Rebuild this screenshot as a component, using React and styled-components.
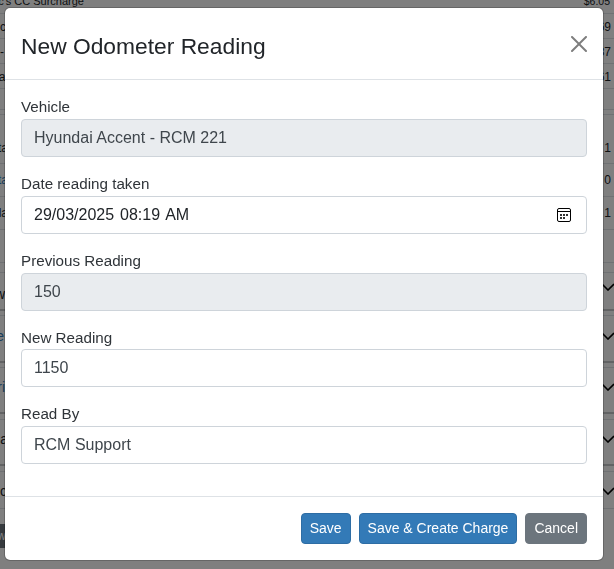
import styled, { createGlobalStyle } from 'styled-components';

const GlobalStyle = createGlobalStyle`
  html, body {
    margin: 0;
    height: 100%;
    overflow: hidden;
    background: #fff;
    font-family: "Liberation Sans", Arial, sans-serif;
    color: #212529;
  }
  * { box-sizing: border-box; }
`;

const Table = styled.div`
  margin-top: -11px;
  width: 614px;
`;

const Row = styled.div`
  display: flex;
  justify-content: space-between;
  align-items: center;
  height: ${(props) => props.$height}px;
  padding-top: ${(props) => props.$shift || 0}px;
  padding-bottom: ${(props) => props.$lift || 0}px;
  border-bottom: ${(props) => (props.$thick ? '2px solid #c4c6c8' : '1px solid #dee2e6')};
`;

const LeftCell = styled.div`
  width: ${(props) => props.$width || 6}px;
  margin-top: ${(props) => props.$drop || 0}px;
  display: flex;
  justify-content: flex-end;
  overflow: hidden;
  white-space: nowrap;
  font-size: ${(props) => props.$size || 12}px;
  color: ${(props) => (props.$link ? '#337ab7' : '#212529')};
`;

const RightCell = styled.div`
  padding-right: ${(props) => props.$pad || 3}px;
  font-size: ${(props) => props.$size || 12}px;
  white-space: nowrap;
`;

const ChevronIcon = styled.svg`
  display: block;
  margin-right: -1px;
`;

const FooterStrip = styled.div`
  margin-top: 15px;
  width: 6px;
  height: 24px;
  background: #6c757d;
  color: #fff;
  font-size: 12px;
  line-height: 24px;
  display: flex;
  justify-content: flex-end;
  overflow: hidden;
`;

const Backdrop = styled.div`
  position: fixed;
  inset: 0;
  background: rgba(0, 0, 0, 0.5);
`;

const Modal = styled.div`
  width: 600px;
  margin: 7px 0 0 4px;
  background: #fff;
  border: 1px solid rgba(0, 0, 0, 0.2);
  border-radius: 6px;
  background-clip: padding-box;
`;

const ModalHeader = styled.div`
  height: 72px;
  display: flex;
  align-items: center;
  justify-content: space-between;
  padding: 4px 16px 0;
  border-bottom: 1px solid #dee2e6;
`;

const Title = styled.h5`
  margin: 0;
  font-size: 22.8px;
  font-weight: 500;
  line-height: 36px;
`;

const CloseButton = styled.button`
  width: 16px;
  height: 16px;
  margin-bottom: 4px;
  padding: 0;
  border: 0;
  background: none;
  opacity: 0.5;
  display: flex;
`;

const ModalBody = styled.div`
  padding: 16.2px 16px 16px;
`;

const FormGroup = styled.div`
  margin-bottom: 16px;
`;

const Label = styled.label`
  display: block;
  font-size: 15.2px;
  line-height: 22.8px;
  color: #2f3439;
`;

const FieldWrap = styled.div`
  position: relative;
`;

const Input = styled.input`
  display: block;
  width: 100%;
  height: 38px;
  padding: 6px 12px;
  font: inherit;
  font-size: 16px;
  line-height: 24px;
  word-spacing: ${(props) => props.$wordSpacing || 0}px;
  color: ${(props) => (props.$dark ? '#212529' : '#3f464c')};
  background: ${(props) => (props.$locked ? '#e9ecef' : '#fff')};
  border: 1px solid #ced4da;
  border-radius: 4px;
  outline: none;
`;

const PickerIcon = styled.svg`
  position: absolute;
  top: 12px;
  right: 15px;
  width: 15px;
  height: 15px;
`;

const ModalFooter = styled.div`
  display: flex;
  justify-content: flex-end;
  gap: 8px;
  padding: 16px;
  border-top: 1px solid #dee2e6;
`;

const Button = styled.button`
  height: 31px;
  padding: 4px 8px;
  font: inherit;
  font-size: 14px;
  line-height: 21px;
  color: #fff;
  background: ${(props) => (props.$secondary ? '#6c757d' : '#337ab7')};
  border: 1px solid ${(props) => (props.$secondary ? '#6c757d' : '#2e6da4')};
  border-radius: 4px;
`;

const rows = [
  { height: 25, left: "Misc's CC Surcharge", width: 84, size: 11, right: '$6.05', rightSize: 10.5, rightPad: 4 },
  { height: 25, shift: 2, left: 'Misc', right: '$4.69' },
  { height: 25, shift: 2, left: '-', width: 4, right: '$2.37' },
  { height: 25, shift: 2, left: 'Total', width: 8, right: '$1.61' },
  { height: 21 },
  { height: 5 },
  { height: 49, shift: 18, left: 'Data', width: 8, right: '1' },
  { height: 33, left: 'Data', width: 8, link: true, right: '0' },
  { height: 33, left: 'Sla', width: 8, right: '1' },
  { height: 33 },
  { height: 10 },
  { height: 38, left: 'View', width: 5, size: 14, chevron: true, lift: 8, drop: 14, thick: true },
  { height: 5 },
  { height: 47, left: 'Note', width: 4, size: 14, link: true, chevron: true, lift: 5, thick: true },
  { height: 5 },
  { height: 46, left: 'Tri', width: 5, size: 14, link: true, chevron: true, lift: 6, thick: true },
  { height: 6 },
  { height: 46, left: 'Usa', width: 8, size: 14, chevron: true, lift: 6, thick: true },
  { height: 6 },
  { height: 37, left: 'Doc', width: 7, size: 14, chevron: true, shift: 2 },
];

const Chevron = () => (
  <ChevronIcon width="14" height="8" viewBox="0 0 14 8" fill="none">
    <path d="M1 1l6 6 6-6" stroke="#000" strokeWidth="1.6" />
  </ChevronIcon>
);

const App = () => {
  return (
    <>
      <GlobalStyle />
      <Table>
        {rows.map((row, i) => (
          <Row key={i} $height={row.height} $shift={row.shift} $lift={row.lift} $thick={row.thick}>
            <LeftCell $width={row.width} $size={row.size} $link={row.link} $drop={row.drop}>
              {row.left}
            </LeftCell>
            {row.chevron ? (
              <Chevron />
            ) : (
              <RightCell $size={row.rightSize} $pad={row.rightPad}>
                {row.right}
              </RightCell>
            )}
          </Row>
        ))}
        <FooterStrip>New</FooterStrip>
      </Table>
      <Backdrop>
        <Modal>
          <ModalHeader>
            <Title>New Odometer Reading</Title>
            <CloseButton aria-label="Close">
              <svg width="16" height="16" viewBox="0 0 16 16" fill="#000">
                <path d="M.293.293a1 1 0 0 1 1.414 0L8 6.586 14.293.293a1 1 0 1 1 1.414 1.414L9.414 8l6.293 6.293a1 1 0 0 1-1.414 1.414L8 9.414l-6.293 6.293a1 1 0 0 1-1.414-1.414L6.586 8 .293 1.707a1 1 0 0 1 0-1.414z" />
              </svg>
            </CloseButton>
          </ModalHeader>
          <ModalBody>
            <FormGroup>
              <Label>Vehicle</Label>
              <Input $locked value="Hyundai Accent - RCM 221" readOnly />
            </FormGroup>
            <FormGroup>
              <Label>Date reading taken</Label>
              <FieldWrap>
                <Input $dark $wordSpacing={1.5} value="29/03/2025 08:19 AM" readOnly />
                <PickerIcon viewBox="0 0 15 15" fill="none">
                  <rect x="0.5" y="0.5" width="13" height="13" rx="1.5" stroke="#000" />
                  <path d="M.5 3.5h13" stroke="#000" />
                  <path d="M3 6h2v2H3zM6 6h2v2H6zM9 6h2v2H9zM3 9h2v2H3zM6 9h2v2H6z" fill="#333" />
                </PickerIcon>
              </FieldWrap>
            </FormGroup>
            <FormGroup>
              <Label>Previous Reading</Label>
              <Input $locked value="150" readOnly />
            </FormGroup>
            <FormGroup>
              <Label>New Reading</Label>
              <Input value="1150" readOnly />
            </FormGroup>
            <FormGroup>
              <Label>Read By</Label>
              <Input value="RCM Support" readOnly />
            </FormGroup>
          </ModalBody>
          <ModalFooter>
            <Button>Save</Button>
            <Button>Save &amp; Create Charge</Button>
            <Button $secondary>Cancel</Button>
          </ModalFooter>
        </Modal>
      </Backdrop>
    </>
  );
};

export default App;
